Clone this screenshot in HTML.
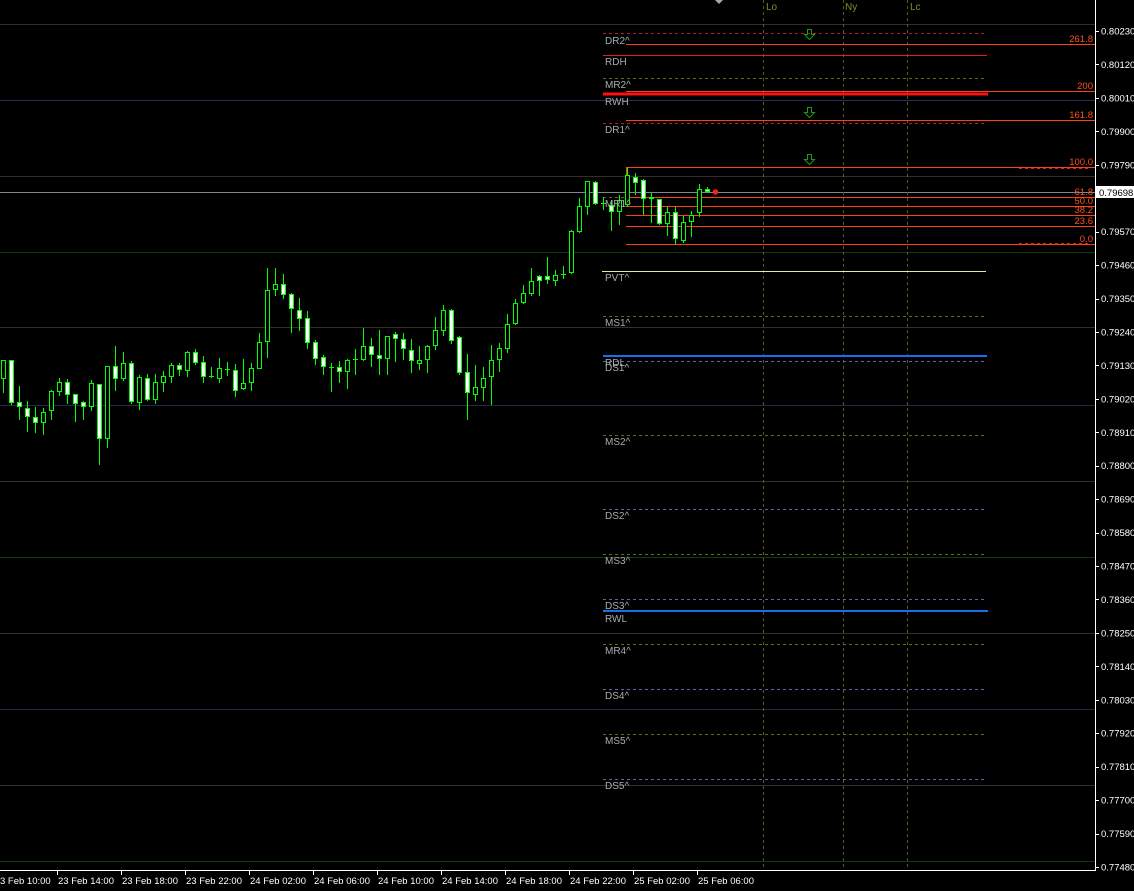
<!DOCTYPE html>
<html><head><meta charset="utf-8"><style>
html,body{margin:0;padding:0;background:#000;width:1134px;height:891px;overflow:hidden}
svg{display:block}
text{font-family:"Liberation Sans",sans-serif}
</style></head><body>
<svg id="s" width="1134" height="891" xmlns="http://www.w3.org/2000/svg">
<rect width="1134" height="891" fill="#000"/>
<!-- full-width level lines -->
<g stroke-width="1" shape-rendering="crispEdges">
<line x1="0" y1="24.5" x2="1095" y2="24.5" stroke="#3a2e22"/>
<line x1="0" y1="100.5" x2="1095" y2="100.5" stroke="#2c2c5a"/>
<line x1="0" y1="176.5" x2="1095" y2="176.5" stroke="#3a2e22"/>
<line x1="0" y1="192.5" x2="1095" y2="192.5" stroke="#7c8894"/>
<line x1="0" y1="252.5" x2="1095" y2="252.5" stroke="#0e3a0e"/>
<line x1="0" y1="327.5" x2="1095" y2="327.5" stroke="#3a2e22"/>
<line x1="0" y1="405.5" x2="1095" y2="405.5" stroke="#26264a"/>
<line x1="0" y1="481.5" x2="1095" y2="481.5" stroke="#3a2e22"/>
<line x1="0" y1="557.5" x2="1095" y2="557.5" stroke="#0e3a0e"/>
<line x1="0" y1="633.5" x2="1095" y2="633.5" stroke="#3a2e22"/>
<line x1="0" y1="709.5" x2="1095" y2="709.5" stroke="#26264a"/>
<line x1="0" y1="785.5" x2="1095" y2="785.5" stroke="#3a2e22"/>
<line x1="0" y1="861.5" x2="1095" y2="861.5" stroke="#0e3a0e"/>
</g>
<!-- vertical session lines -->
<g stroke="#5a5a1c" stroke-dasharray="3,3" shape-rendering="crispEdges">
<line x1="763.5" y1="0" x2="763.5" y2="870"/>
<line x1="843.5" y1="0" x2="843.5" y2="870"/>
<line x1="907.5" y1="0" x2="907.5" y2="870"/>
</g>
<g font-size="10" fill="#8a8a28">
<text x="766" y="10">Lo</text><text x="845" y="10">Ny</text><text x="910" y="10">Lc</text>
</g>
<polygon points="715,0 723,0 719,4" fill="#a0a8b8"/>
<!-- pivot dashed lines -->
<g stroke-dasharray="3,3" shape-rendering="crispEdges">
<line x1="603" y1="33.5" x2="984" y2="33.5" stroke="#b02020"/>
<line x1="603" y1="78.5" x2="984" y2="78.5" stroke="#6a6a1a"/>
<line x1="603" y1="123.5" x2="984" y2="123.5" stroke="#b02020"/>
<line x1="603" y1="197.5" x2="640" y2="197.5" stroke="#6a6a1a"/>
<line x1="603" y1="316.5" x2="984" y2="316.5" stroke="#6a6a1a"/>
<line x1="603" y1="361.5" x2="984" y2="361.5" stroke="#6060b0"/>
<line x1="603" y1="435.5" x2="984" y2="435.5" stroke="#6a6a1a"/>
<line x1="603" y1="509.5" x2="984" y2="509.5" stroke="#6060b0"/>
<line x1="603" y1="554.5" x2="984" y2="554.5" stroke="#6a6a1a"/>
<line x1="603" y1="599.5" x2="984" y2="599.5" stroke="#6060b0"/>
<line x1="603" y1="644.5" x2="984" y2="644.5" stroke="#6a6a1a"/>
<line x1="603" y1="689.5" x2="984" y2="689.5" stroke="#6060b0"/>
<line x1="603" y1="734.5" x2="984" y2="734.5" stroke="#6a6a1a"/>
<line x1="603" y1="779.5" x2="984" y2="779.5" stroke="#6060b0"/>
<line x1="1019" y1="168.5" x2="1089" y2="168.5" stroke="#e02020"/>
<line x1="1019" y1="243.5" x2="1089" y2="243.5" stroke="#e02020"/>
</g>
<g shape-rendering="crispEdges">
<line x1="603" y1="55.5" x2="987" y2="55.5" stroke="#e02020"/>
<line x1="603" y1="94" x2="988" y2="94" stroke="#ff1010" stroke-width="3"/>
<line x1="602" y1="271.5" x2="986" y2="271.5" stroke="#e8e8a0"/>
<line x1="603" y1="356" x2="987" y2="356" stroke="#1870e8" stroke-width="2"/>
<line x1="603" y1="611" x2="988" y2="611" stroke="#1870e8" stroke-width="2"/>
<g stroke="#ff4010">
<line x1="626" y1="44.5" x2="1095" y2="44.5"/>
<line x1="626" y1="91.5" x2="1095" y2="91.5"/>
<line x1="626" y1="120.5" x2="1095" y2="120.5"/>
<line x1="626" y1="167.5" x2="1095" y2="167.5"/>
<line x1="626" y1="197.5" x2="1095" y2="197.5"/>
<line x1="626" y1="206.5" x2="1095" y2="206.5"/>
<line x1="626" y1="215.5" x2="1095" y2="215.5"/>
<line x1="626" y1="226.5" x2="1095" y2="226.5"/>
<line x1="626" y1="244.5" x2="1095" y2="244.5"/>
<line x1="626.5" y1="167" x2="626.5" y2="178"/>
</g>
</g>
<g font-size="9.5" fill="#ff5020" text-anchor="end">
<text x="1093" y="42">261.8</text><text x="1093" y="89">200</text><text x="1093" y="118">161.8</text>
<text x="1093" y="165">100.0</text><text x="1093" y="195">61.8</text><text x="1093" y="204">50.0</text>
<text x="1093" y="213">38.2</text><text x="1093" y="224">23.6</text><text x="1093" y="242">0.0</text>
</g>
<!-- green arrows -->
<g fill="none" stroke="#1a9a1a" stroke-width="1">
<path d="M807.5,29.5h4v5h3l-5,5-5-5h3z"/>
<path d="M807.5,107.5h4v5h3l-5,5-5-5h3z"/>
<path d="M807.5,154.5h4v5h3l-5,5-5-5h3z"/>
</g>
<g id="candles"></g>
<circle cx="715.5" cy="192" r="2.7" fill="#ff2020"/>
<!-- pivot labels -->
<g font-size="10" fill="#a8acb0">
<text x="605" y="44">DR2^</text><text x="605" y="65">RDH</text><text x="605" y="88">MR2^</text>
<text x="605" y="105">RWH</text><text x="605" y="133">DR1^</text><text x="605" y="207">MR1^</text>
<text x="605" y="281">PVT^</text><text x="605" y="326">MS1^</text><text x="605" y="366">RDL</text>
<text x="605" y="371">DS1^</text><text x="605" y="445">MS2^</text><text x="605" y="519">DS2^</text>
<text x="605" y="564">MS3^</text><text x="605" y="609">DS3^</text><text x="605" y="622">RWL</text>
<text x="605" y="654">MR4^</text><text x="605" y="699">DS4^</text><text x="605" y="744">MS5^</text>
<text x="605" y="789">DS5^</text>
</g>
<!-- axes -->
<g shape-rendering="crispEdges" stroke="#ffffff">
<line x1="1095.5" y1="0" x2="1095.5" y2="871"/>
<line x1="0" y1="870.5" x2="1096" y2="870.5"/>
</g>
<g id="axis" font-size="9.5" fill="#ffffff"></g>
<rect x="1096" y="186" width="38" height="12" fill="#ffffff"/>
<text x="1099" y="196" font-size="9.5" fill="#000">0.79698</text>
</svg>
<script>
var ns="http://www.w3.org/2000/svg";
function el(t,a,p){var e=document.createElementNS(ns,t);for(var k in a)e.setAttribute(k,a[k]);p.appendChild(e);return e;}
var c=[[300,356,300,398,0],[300,428,300,434,1],[427,442,378,480,1],[445,470,422,516,1],[472,490,440,518,1],[457,490,444,524,0],[394,452,390,480,0],[367,395,354,408,0],[367,404,357,432,1],[403,431,403,486,1],[427,440,423,480,1],[370,440,360,452,0],[373,538,373,614,1],[319,536,319,564,0],[319,356,258,392,1],[310,356,276,362,0],[310,425,303,432,1],[352,428,345,450,0],[355,420,342,422,1],[367,420,342,432,0],[349,368,334,396,0],[316,350,309,368,0],[316,331,309,348,1],[277,332,272,350,0],[277,308,268,314,1],[307,352,289,368,1],[348,350,320,354,2],[325,358,294,368,0],[327,331,306,348,2],[331,392,313,410,1],[370,386,297,390,0],[325,370,310,392,0],[247,326,220,326,0],[91,247,24,294,0],[73,89,24,108,0],[73,106,42,116,1],[103,146,100,218,1],[151,176,114,212,1],[175,248,153,266,1],[247,296,240,314,1],[292,322,286,344,1],[321,323,310,396,2],[322,335,304,368,1],[300,335,298,386,0],[298,302,268,344,2],[259,299,204,302,0],[259,284,234,320,1],[286,296,210,344,1],[229,296,229,344,0],[223,236,216,305,1],[238,268,220,300,1],[271,302,237,338,1],[301,311,258,330,0],[259,299,255,340,0],[211,257,171,270,0],[151,212,136,228,0],[151,242,148,252,1],[232,338,228,344,1],[337,400,282,480,1],[382,404,315,422,0],[355,383,320,422,0],[300,352,255,434,0],[265,299,250,336,0],[193,266,162,278,0],[130,191,118,196,0],[100,130,75,132,0],[63,102,24,108,0],[49,64,46,108,1],[49,61,-8,72,1],[46,64,30,78,0],[42,44,18,56,2],[-86,40,-90,42,0],[-161,-85,-186,-82,0],[-236,-158,-236,-136,0],[-233,-167,-236,-165,1],[-170,-169,-188,-150,2],[-164,-143,-176,-88,1],[-179,-145,-196,-104,0],[-256,-166,-278,-160,0],[-248,-230,-260,-194,1],[-239,-182,-242,-134,1],[-188,-182,-200,-110,1],[-182,-107,-182,-104,1],[-143,-109,-160,-72,0],[-143,-62,-160,-46,1],[-113,-56,-132,-50,0],[-134,-113,-148,-70,0],[-212,-140,-228,-128,0],[-212,-203,-218,-201,1]];
var g=document.getElementById("candles");
function Y(z){return Math.round(260+z/3);}
c.forEach(function(d,i){
 var x=Math.round(3.3+8*i);
 var bt=Y(d[0]),bb=Y(d[1]),wt=Y(d[2]),wb=Y(d[3]);
 el("rect",{x:x,y:wt,width:1,height:Math.max(1,wb-wt),fill:"#00ff00"},g);
 if(d[4]==2){el("rect",{x:x-2,y:bt,width:5,height:1,fill:"#00ff00"},g);return;}
 var h=Math.max(2,bb-bt);
 el("rect",{x:x-2,y:bt,width:5,height:h,fill:"#00ff00"},g);
 el("rect",{x:x-1,y:bt+1,width:3,height:Math.max(0,h-2),fill:d[4]==1?"#ffffff":"#000000"},g);
});
var a=document.getElementById("axis");
var labels=["0.80230","0.80120","0.80010","0.79900","0.79790","0.79680","0.79570","0.79460","0.79350","0.79240","0.79130","0.79020","0.78910","0.78800","0.78690","0.78580","0.78470","0.78360","0.78250","0.78140","0.78030","0.77920","0.77810","0.77700","0.77590","0.77480"];
labels.forEach(function(t,i){var y=31+i*33.44;
 if(i!=5){el("rect",{x:1096,y:Math.round(y),width:3,height:1,fill:"#fff"},a);
 var tx=el("text",{x:1101,y:(y+3.5).toFixed(1)},a);tx.textContent=t;}});
var tl=["3 Feb 10:00","23 Feb 14:00","23 Feb 18:00","23 Feb 22:00","24 Feb 02:00","24 Feb 06:00","24 Feb 10:00","24 Feb 14:00","24 Feb 18:00","24 Feb 22:00","25 Feb 02:00","25 Feb 06:00"];
tl.forEach(function(t,i){var x=i==0?0:58+(i-1)*64;
 if(i>0)el("rect",{x:x-1,y:871,width:1,height:4,fill:"#fff"},a);
 var tx=el("text",{x:x,y:884},a);tx.textContent=t;});
</script>
</body></html>
